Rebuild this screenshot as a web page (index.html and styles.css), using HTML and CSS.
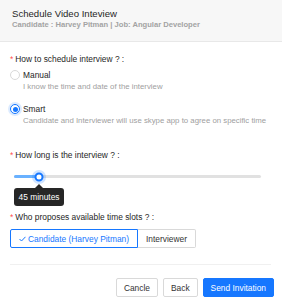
FILE: index.html
```html
<!DOCTYPE html>
<html lang="en">
<head>
  <meta charset="UTF-8">
  <meta name="viewport" content="width=device-width, initial-scale=1.0">
  <title>Schedule Video Inteview</title>
  <link rel="stylesheet" href="styles.css">
</head>
<body>
  <!-- Cabecera del modal -->
  <header class="modal-head">
    <h1>Schedule Video Inteview</h1>
    <p>Candidate : Harvey Pitman | Job: Angular Developer</p>
  </header>

  <div class="modal-body">
    <!-- Tipo de agenda -->
    <div class="label"><span class="req">*</span>How to schedule interview ? :</div>
    <div class="radio"><span class="circle"></span>Manual</div>
    <div class="hint">I know the time and date of the interview</div>
    <div class="radio smart"><span class="circle checked"></span>Smart</div>
    <div class="hint">Candidate and Interviewer will use skype app to agree on specific time</div>

    <!-- Duración -->
    <div class="label gap-lg"><span class="req">*</span>How long is the interview ? :</div>
    <div class="slider">
      <div class="track">
        <div class="fill"></div>
        <div class="handle"></div>
        <div class="tip">45 minutes</div>
      </div>
    </div>

    <!-- Quién propone -->
    <div class="label slots"><span class="req">*</span>Who proposes available time slots ? :</div>
    <div class="segment">
      <button class="seg active">
        <svg width="7" height="6" viewBox="0 0 7 6"><polyline points="0.5,3 2.5,5 6.5,0.8" fill="none" stroke="#1677ff" stroke-width="1"/></svg>
        Candidate (Harvey Pitman)
      </button>
      <button class="seg">Interviewer</button>
    </div>

    <div class="divider"></div>

    <!-- Acciones -->
    <div class="actions">
      <button class="btn">Cancle</button>
      <button class="btn">Back</button>
      <button class="btn primary">Send Invitation</button>
    </div>
  </div>
</body>
</html>
```

FILE: styles.css
```css
/* General */
body {
  margin: 0;
  font-family: "Liberation Sans", Arial, sans-serif;
  font-size: 8.4px;
  color: #333;
  background: #fff;
}
button {
  font-family: inherit;
  font-size: 8.4px;
  cursor: pointer;
}
/* Cabecera */
.modal-head {
  height: 42px;
  box-sizing: border-box;
  padding: 7px 12px 0;
  background: #f7f7f7;
  border-bottom: 1px solid #e8e8e8;
}
.modal-head h1 {
  margin: 0;
  font-size: 9.6px;
  font-weight: normal;
  line-height: 13px;
  color: #262626;
}
.modal-head p {
  margin: 0;
  font-size: 7.6px;
  font-weight: bold;
  line-height: 10px;
  color: #a3a3a3;
}
/* Cuerpo */
.modal-body {
  padding: 11px 8px 0 10px;
}
.label {
  line-height: 12px;
  color: #262626;
}
.req {
  color: #ff4d4f;
  margin-right: 2px;
}
.gap-lg {
  margin-top: 22px;
}
.radio {
  display: flex;
  align-items: center;
  margin-top: 4px;
  line-height: 12px;
  color: #262626;
}
.radio.smart {
  margin-top: 10px;
}
.circle {
  width: 10px;
  height: 10px;
  box-sizing: border-box;
  border: 1px solid #d9d9d9;
  border-radius: 50%;
  margin-right: 3px;
  background: #fff;
}
.circle.checked {
  border-color: #1677ff;
  box-shadow: 0 0 0 2px rgba(22, 119, 255, 0.15);
  position: relative;
}
.circle.checked::after {
  content: "";
  position: absolute;
  left: 1.5px;
  top: 1.5px;
  width: 5px;
  height: 5px;
  border-radius: 50%;
  background: #1677ff;
}
.hint {
  padding-left: 13px;
  font-size: 7.8px;
  line-height: 12px;
  color: #a0a0a0;
  white-space: nowrap;
}
/* Slider */
.slider {
  margin: 14px 13px 0 4px;
}
.track {
  position: relative;
  height: 3px;
  border-radius: 2px;
  background: #e1e1e1;
}
.fill {
  width: 25px;
  height: 100%;
  border-radius: 2px;
  background: #69b1ff;
}
.handle {
  position: absolute;
  left: 25px;
  top: 1.5px;
  width: 9px;
  height: 9px;
  box-sizing: border-box;
  transform: translate(-50%, -50%);
  border: 2px solid #1677ff;
  border-radius: 50%;
  background: #fff;
  box-shadow: 0 0 0 2.5px rgba(22, 119, 255, 0.2);
}
.tip {
  position: absolute;
  left: 0;
  top: 13px;
  width: 50px;
  height: 18px;
  line-height: 18px;
  text-align: center;
  color: #fff;
  background: rgba(0, 0, 0, 0.85);
  border-radius: 3px;
}
.tip::before {
  content: "";
  position: absolute;
  left: 21px;
  top: -4px;
  border-left: 4px solid transparent;
  border-right: 4px solid transparent;
  border-bottom: 4px solid rgba(0, 0, 0, 0.85);
}
.slots {
  margin-top: 33px;
}
/* Botones segmentados */
.segment {
  display: flex;
  margin-top: 6px;
}
.seg {
  height: 19px;
  padding: 0 8px;
  border: 1px solid #d9d9d9;
  border-left: none;
  background: #fff;
  color: #333;
  border-radius: 0 2px 2px 0;
}
.seg.active {
  display: flex;
  align-items: center;
  gap: 2px;
  padding: 0 8px;
  border: 1px solid #1677ff;
  border-radius: 2px 0 0 2px;
  color: #1677ff;
}
.divider {
  height: 1px;
  margin: 16px 3px 0 0;
  background: #f0f0f0;
}
/* Acciones */
.actions {
  display: flex;
  justify-content: flex-end;
  gap: 5px;
  margin-top: 13px;
}
.btn {
  height: 19px;
  padding: 0 7px;
  border: 1px solid #d9d9d9;
  border-radius: 2px;
  background: #fff;
  color: #333;
}
.btn.primary {
  background: #1677ff;
  border-color: #1677ff;
  color: #fff;
}
```
